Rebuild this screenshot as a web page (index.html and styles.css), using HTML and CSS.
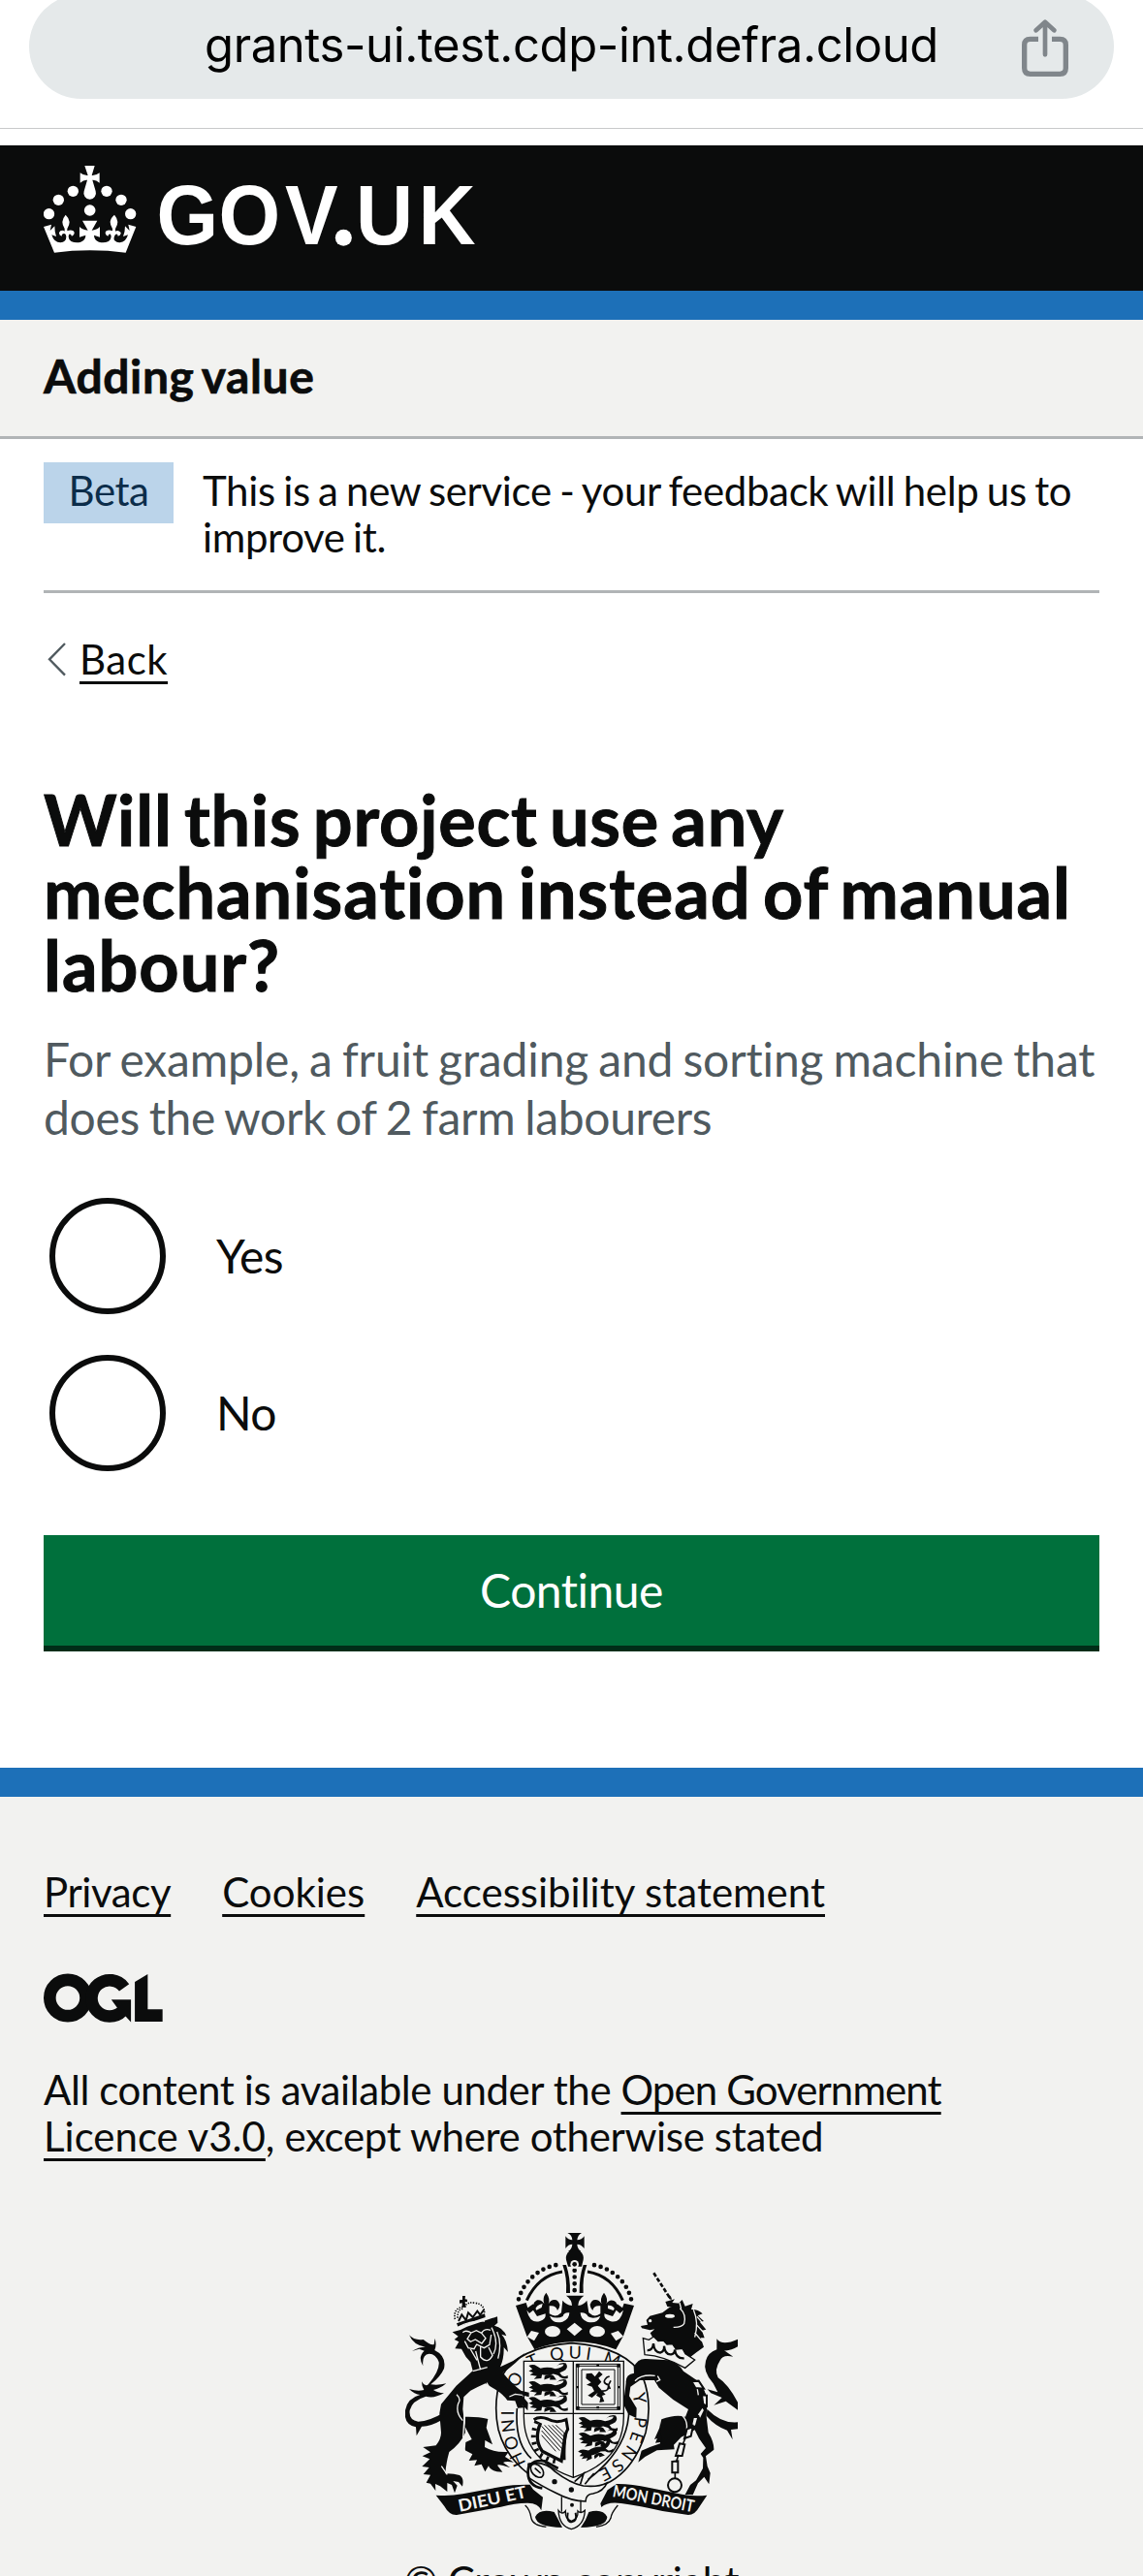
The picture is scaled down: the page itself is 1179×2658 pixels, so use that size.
FILE: index.html
```html
<!DOCTYPE html>
<html lang="en">
<head>
<meta charset="utf-8">
<title>Will this project use any mechanisation instead of manual labour? - Adding value</title>
<link rel="stylesheet" href="styles.css">
</head>
<body>
<div class="browser-bar">
  <div class="address">
    <span class="address__url">grants-ui.test.cdp-int.defra.cloud</span>
    <svg class="address__share" viewBox="72 60 150 180" fill="none" stroke="#80868b" aria-label="Share">
      <path stroke-width="16" d="M126 121H101Q83 121 83 139V211Q83 229 101 229H193Q211 229 211 211V139Q211 121 193 121H168"/>
      <path stroke-width="14" stroke-linecap="round" stroke-linejoin="round" d="M147 169V70M119 94L147 68L175 94"/>
    </svg>
  </div>
</div>

<header class="header">
  <svg class="header__logo" viewBox="45 0 1350 330" fill="#fff" role="img" aria-label="GOV.UK">
    <circle cx="61.500" cy="182" r="17"/><circle cx="91" cy="139" r="17"/><circle cx="136" cy="112" r="17"/>
    <circle cx="240" cy="112" r="17"/><circle cx="285" cy="139" r="17"/><circle cx="314" cy="182" r="17"/><circle cx="188" cy="171" r="17.500"/>
    <path d="M172 33H203L194 63Q207 64 218 55V86Q207 76 196 77L206 112A19 19 0 1 1 170 112L180 77Q169 76 158 86V55Q169 64 182 63Z"/>
    <path d="M45 222L69 215L65 234L79 220Q79 238 84 252L70 247Q77 271 97 271Q115 270 115 253Q114 243 108 243Q101 243 101 251Q92 248 93 240Q97 231 107 234L110 236V228Q103 217 103 207Q104 195 113 185Q124 195 125 207Q125 217 118 228V235Q129 230 137 235Q145 244 132 251Q129 242 124 245Q118 257 130 267Q144 273 160 269Q175 263 175 248L156 254V222Q166 232 182 233L165 203H211L194 233Q210 232 219 222V254L201 248Q201 263 216 269Q232 273 246 267Q258 257 252 245Q247 242 244 251Q231 244 239 235Q247 230 258 235V228Q251 217 251 207Q252 195 264 185Q273 195 274 207Q274 217 267 228V236Q275 230 284 240Q285 248 275 251Q274 241 267 246Q260 256 264 264Q272 272 281 271Q300 269 306 247L291 252Q297 238 297 220L311 234L307 215L331 222L299 302Q188 288 78 302Z"/>
    <text class="header__wordmark" transform="scale(0.930 1)" y="276" x="424 631 852 1010 1087 1295">GOV.UK</text>
    <circle cx="973" cy="256" r="25.500"/>
  </svg>
</header>

<section class="service"><a class="service__name">Adding value</a></section>

<div class="container">
  <div class="phase">
    <strong class="phase__tag">Beta</strong>
    <span class="phase__text">This is a new service - your feedback will help us to improve it.</span>
  </div>
  <a class="back"><svg class="back__chevron" viewBox="0 0 60 105" fill="none" stroke="#505a5f" stroke-width="7"><path d="M54 3L6 52L54 101"/></svg><span class="link">Back</span></a>
  <main class="main">
    <h1 class="heading"><span class="heading__lead">Will this project use any</span> mechanisation instead of manual labour?</h1>
    <p class="hint">For example, a fruit grading and sorting machine that <span class="hint__end">does the work of 2 farm labourers</span></p>
    <div class="radios">
      <label class="radio"><span class="radio__dot"></span>Yes</label>
      <label class="radio"><span class="radio__dot"></span>No</label>
    </div>
    <button class="button" type="button">Continue</button>
  </main>
</div>

<footer class="footer">
  <nav class="footer__links"><a class="link footer__privacy">Privacy</a><a class="link">Cookies</a><a class="link">Accessibility statement</a></nav>
  <svg class="footer__ogl" viewBox="15 51 370 152" role="img" aria-label="Open Government Licence">
    <g fill="none" stroke="#0b0c0c" stroke-width="38"><circle cx="90" cy="127" r="56"/><path d="M265 95A56 56 0 1 0 260 167"/></g>
    <path fill="#0b0c0c" d="M225 132H286V202L268 183L243 157ZM298 77L338 53V162H384V201H298Z"/>
  </svg>
  <p class="footer__licence">All content is available under the <a class="link"><span class="footer__open">Open Government</span> <span class="footer__version">Licence v3.0</span></a><span class="footer__rest">, except where otherwise stated</span></p>
  <div class="footer__copyright">
    <svg class="crest" viewBox="54 66 1029 930" role="img" aria-label="Royal coat of arms">
      <defs>
        <path id="garter-left" d="M428 784Q385 705 390 610Q396 555 428 500"/>
        <path id="garter-top" d="M440 492Q572 430 712 492"/>
        <path id="garter-right" d="M757 570Q778 655 737 735Q705 785 640 812"/>
        <path id="scroll-left" d="M222 935Q320 915 438 889"/>
        <path id="scroll-right" d="M694 888Q810 910 950 938"/>
      </defs>
      <!-- crown -->
      <g fill="#0b0c0c">
        <path d="M556 72H600Q588 78 586 94Q600 94 608 82V120Q598 107 586 107Q587 122 598 129H558Q570 122 571 107Q558 107 550 120V82Q558 94 571 94Q570 78 556 72Z"/>
        <path d="M552 155A27 27 0 1 1 605 155L600 176H558Z"/>
        <path d="M541 171L552 171Q565 210 564 258H552Q555 210 541 171ZM616 171L605 171Q592 210 593 258H605Q602 210 616 171Z"/>
        <path d="M396 297L428 288L433 304L450 292L460 311L476 303L479 291Q457 296 457 311Q442 290 462 280Q475 277 484 291Q477 274 490 257Q504 276 497 292Q506 275 522 280Q541 292 525 312Q521 295 500 298L500 322Q520 336 537 319L541 281Q551 294 570 297Q570 279 552 266H607Q589 279 589 297Q607 294 616 281L622 319Q640 336 658 322V298Q637 295 634 312Q617 292 636 280Q652 275 662 292Q655 276 669 257Q683 276 676 291Q686 276 700 282Q716 290 703 311Q699 295 681 296V306L698 312L710 292L726 304L731 290L762 297L729 391L706 433Q578 385 454 433L430 391Z"/>
      </g>
      <g fill="none" stroke="#0b0c0c">
        <path stroke-width="14" stroke-linecap="round" stroke-dasharray="0 20.500" d="M405 277C420 222 470 177 530 170M753 277C740 222 690 177 629 170M578 188V256"/>
        <path stroke-width="9" d="M430 281Q465 204 540 192M727 281Q693 204 618 192"/>
      </g>
      <g fill="#f2f2f0">
        <path d="M578 350L602 370L578 391L554 370ZM444 375L468 381L453 406L431 394ZM713 375L729 392L706 406L690 383Z"/>
        <ellipse cx="510" cy="377" rx="24" ry="17"/><ellipse cx="648" cy="377" rx="24" ry="17"/>
        <circle cx="578" cy="169" r="13"/>
        <path d="M430 311Q440 354 471 345Q491 340 488 322L462 330L450 311L438 321ZM501 329Q511 355 541 347Q562 339 562 319Q545 317 542 330Q524 340 501 329ZM596 319Q596 339 617 347Q648 355 658 329Q636 340 620 331Q613 317 596 319ZM670 322Q668 340 688 345Q719 354 729 311L718 321L707 311L696 330Z"/>
      </g>
      <circle cx="578" cy="169" r="7" fill="#0b0c0c"/>

      <!-- garter and shield -->
      <g class="crest__garter-text">
        <text><textPath href="#garter-left" textLength="282">HONI SO</textPath></text>
        <text><textPath href="#garter-top" textLength="280">T QUI M</textPath></text>
        <text><textPath href="#garter-right" textLength="285">Y PENSE</textPath></text>
      </g>
      <g fill="none" stroke="#0b0c0c" stroke-width="5">
        <path d="M350 520Q400 425 570 413Q740 425 790 520Q820 600 798 690Q755 830 640 862M350 520Q325 600 342 680Q364 765 438 820"/>
        <path d="M400 615Q392 722 444 770M745 590Q760 730 620 835" />
        <path fill="#f2f2f0" stroke-width="4" d="M421 469H730V640C730 720 690 790 574 829C460 790 421 720 421 640Z"/>
        <path stroke-width="4" d="M574 469V829M421 631H730"/>
        <path stroke-width="3" d="M583 478H719V619H583ZM589 484H712V613H589ZM600 495H702V603H600Z"/>
      </g>
      <!-- English lions, first and fourth quarters -->
      <defs>
        <g id="passant">
          <path d="M2 2Q14-4 24 3L34 9Q53 3 74 10Q95 8 97-2Q83-3 77 3Q89-9 103-5Q112 9 95 17L86 21L92 29Q100 33 108 28V36Q92 40 82 28L69 24Q50 29 38 26L36 36L16 38L24 30L5 27L14 21L2 16L12 11Z"/>
          <path d="M45 30Q57 22 69 29L77 40H59L60 34L44 40Z"/>
        </g>
      </defs>
      <g fill="#0b0c0c">
        <use href="#passant" transform="translate(434 481) scale(1.140)"/><use href="#passant" transform="translate(434 532) scale(1.140)"/><use href="#passant" transform="translate(434 581) scale(1.140)"/>
        <use href="#passant" transform="translate(588 643) scale(1.140)"/><use href="#passant" transform="translate(588 692) rotate(-4) scale(1.140)"/><use href="#passant" transform="translate(586 748) rotate(-19) scale(1)"/>
        <!-- Scottish lion rampant -->
        <path d="M614 508L631 506L641 517L654 500L665 510L652 521L661 533L650 545L663 560L674 572L663 576L670 594L655 597L658 583L645 575L650 566L632 582L619 575L639 562L632 548L615 542L629 535L613 522Z"/>
        <path fill="none" stroke="#0b0c0c" stroke-width="5" d="M662 561Q687 563 682 542Q660 536 678 519L686 516M688 555L683 543L690 529"/>
        <!-- harp -->
        <path fill="none" stroke="#0b0c0c" stroke-width="9" d="M452 650Q470 638 495 648Q520 663 552 650L557 680Q544 700 546 775"/>
        <path fill="none" stroke="#0b0c0c" stroke-width="10" d="M473 660Q451 710 478 748Q507 763 537 778L550 690"/>
        <path fill="none" stroke="#0b0c0c" stroke-width="15" stroke-dasharray="8 14" d="M462 655Q438 708 466 755Q495 775 520 779"/>
        <path fill="none" stroke="#0b0c0c" stroke-width="3" d="M476 670L541 742M476 684L532 746M476 698L520 748M485 667L543 728M497 667L544 715M509 667L544 702M520 667L545 690"/>
      </g>
      <g fill="#0b0c0c"><path d="M583 478h10v10h-10zM709 478h10v10h-10zM583 609h10v10h-10zM709 609h10v10h-10zM646 479h8v7h-8zM646 609h8v7h-8zM584 546h7v7h-7zM711 546h7v7h-7z"/></g>

      <!-- garter buckle -->
      <path fill="#f2f2f0" stroke="#0b0c0c" stroke-width="5" d="M435 787Q485 776 518 811Q565 847 605 855Q650 860 678 846Q668 872 635 879Q613 880 612 903Q568 903 520 877Q470 852 435 829Z"/>
      <path fill="none" stroke="#0b0c0c" stroke-width="8" d="M478 862Q427 854 435 800Q448 772 485 778L527 801"/>
      <ellipse cx="462" cy="808" rx="16" ry="24" transform="rotate(-42 462 808)" fill="#f2f2f0" stroke="#0b0c0c" stroke-width="5"/>
      <path fill="none" stroke="#0b0c0c" stroke-width="5" d="M455 800L473 816M578 842L606 817L596 850M610 850L638 816"/>
      <g fill="#0b0c0c"><circle cx="516" cy="842" r="8"/><circle cx="568" cy="867" r="8"/></g>

      <!-- lion -->
      <g fill="#0b0c0c">
        <path d="M66 388Q82 406 110 402Q134 422 143 417L146 398Q152 421 145 435Q182 453 174 492Q164 516 133 541Q155 545 181 538Q162 554 141 558Q153 567 174 568Q142 586 118 578Q75 591 68 621Q64 651 94 656Q130 654 171 629L169 650Q130 672 105 671L89 700L87 673Q48 665 54 621Q60 584 100 573Q82 572 66 555Q93 564 112 558Q105 548 105 532Q116 550 126 540Q161 499 158 472Q149 446 128 446Q105 448 109 484Q92 456 113 437L97 431L75 438Q95 425 116 425Q80 420 66 388Z"/>
        <path d="M200 379L225 372L245 362L320 337L339 331L340 350L330 359Q357 365 367 391L352 386Q369 403 372 441L359 426Q360 460 348 487L388 468L425 443Q400 474 356 505Q386 542 412 560L437 566V580L414 574L434 598L433 622L414 602L423 613L402 614L394 592L370 590Q360 574 334 557L302 538Q280 548 256 560L235 580L232 617Q238 667 240 690Q225 725 190 750Q180 785 178 817Q202 816 222 822Q237 830 231 857L219 843L202 840L215 854L207 877L198 852L184 846L184 873L162 856L147 849L148 870L132 848L119 845L132 821L110 819L128 798L106 795L130 772L107 763L132 751L109 735L149 730Q165 710 165 690L160 630L165 602L212 545L263 499L256 472L242 456L228 431L208 430L220 409L206 402L218 392Z"/>
        <path d="M240 641Q280 640 310 648L305 675L324 727L301 714L300 735Q328 752 374 750L363 765L390 782Q365 778 357 783L379 799Q344 787 339 791L355 812Q318 811 312 793L301 811L290 788L268 793L276 775L251 777L262 757L239 745L241 720L260 711L239 672Z"/>
        <path d="M213 352L300 322L302 333L217 362Z"/>
        <path d="M231 267H240L239 277L246 278V286L239 285L242 302H230V289L222 290V280L231 279Z"/>
      </g>
      <g fill="none" stroke="#0b0c0c">
        <path stroke-width="5" stroke-dasharray="4 4" d="M208 339Q201 303 239 300Q245 284 272 289Q299 294 299 319M216 335Q215 305 236 307"/>
        <path stroke-width="6" d="M219 345L229 325L242 342L249 319L263 333L277 314L286 326L298 309"/>
      </g>
      <g fill="none" stroke="#f2f2f0" stroke-width="4">
        <path d="M218 363Q257 343 300 345M232 380Q242 371 258 381L274 374L290 382Q300 366 318 373M258 381L246 400L256 409L271 402L291 414L303 398L290 382M238 407L249 428L267 431L275 417L298 428L315 418L320 387M256 432L276 466M287 422L287 456Q309 480 324 451L312 426M272 438L287 496M321 365Q345 410 327 447M338 378Q354 413 341 461M263 500L308 488M306 536L317 556L301 542M376 579L394 571L416 574M213 572Q228 586 218 600Q209 628 232 653M238 625L233 706M166 794L184 820M229 723L243 760"/>
      </g>

      <!-- unicorn -->
      <g fill="#0b0c0c">
        <path d="M783 360L804 356L800 342L811 329L850 319L871 303L896 294L911 279L920 299L944 291L939 309Q960 308 974 322L959 328L978 345L966 348L985 371L972 374L980 397L968 397L978 425L955 442L930 461L800 428L822 400L812 382L826 370L811 373L786 367Z"/>
        <path d="M761 487Q775 459 800 462L868 466Q899 475 915 500L966 535L984 571L988 603L986 641L992 690Q1010 720 1009 743L984 763L989 794L998 815L994 850L979 827L960 847L944 883L920 882L936 852L954 838L975 801L976 768L968 756L984 738L963 708L950 682L908 704L885 728L887 742L833 745L796 765L775 782L785 746L811 735L843 724L842 705L825 711L841 675L847 649Q890 632 921 641L930 618L883 588L839 551L825 528L780 528L751 548L747 577L770 614L769 645L745 634L729 602L737 536Q735 510 762 506Z"/>
        <path d="M1018 400Q1035 423 1083 401V424Q1060 438 1041 436L1069 455Q1036 447 1028 467Q1009 496 1022 520Q1052 539 1083 596V620L1046 593L1009 605L1034 582L1000 568L989 556L1021 565L1007 538Q974 501 984 468Q990 443 1018 433Z"/>
        <path d="M988 617Q1033 663 1083 658V679L1062 681L1067 712L1050 683Q1012 669 986 638Z"/>
        <path d="M859 285L888 277L880 288L912 291L902 305L865 300ZM867 268Q875 260 879 278Q869 280 867 268Z"/>
        <path d="M848 719L828 722L843 684L841 654Z"/>
      </g>
      <path fill="none" stroke="#0b0c0c" stroke-width="8" stroke-dasharray="13 6" d="M823 196L874 275"/>
      <g fill="none" stroke="#f2f2f0" stroke-width="4">
        <path d="M904 305Q925 325 917 353Q909 365 884 364M946 310Q963 350 950 395M957 331L974 351M955 356L975 378M950 381L972 407M903 288L908 307M765 530Q785 509 827 514M835 515L842 527L831 532M955 537L961 574M880 617Q931 639 925 680"/>
      </g>
      <ellipse cx="873" cy="329" rx="15" ry="6" fill="#f2f2f0"/><circle cx="812" cy="344" r="5" fill="#f2f2f0"/>
      <path fill="#f2f2f0" stroke="#0b0c0c" stroke-width="4" d="M790 398L808 403L823 393L837 407L853 405L864 417L881 416L892 432L912 430L921 446L950 465L920 490Q855 453 795 449Z"/>
      <path fill="none" stroke="#0b0c0c" stroke-width="7" d="M803 435Q820 437 822 414Q824 441 843 443Q857 438 855 422Q858 450 877 448Q889 445 888 433Q892 462 917 460"/>
      <g fill="#f2f2f0" stroke="#0b0c0c" stroke-width="6">
        <path d="M940 532L962 530L978 554L952 552ZM972 574L987 575V608L976 602ZM956 634L974 609L981 621L967 650ZM945 641L961 642L953 672L939 669ZM926 679L944 673L938 701L918 708ZM903 724L919 727L911 762L891 762ZM880 780L898 778V814H880Z"/>
        <circle cx="888" cy="853" r="21"/>
      </g>
      <path stroke="#0b0c0c" stroke-width="5" d="M974 553L982 575M978 603L970 612M958 645L962 636M944 665L941 678M923 702L913 726M900 758L892 782M889 812V833"/>

      <!-- scrolls -->
      <g fill="#0b0c0c">
        <path d="M149 884Q190 888 232 880L350 858Q390 850 440 851L450 866L480 890L475 931Q466 908 434 908Q400 907 350 920L213 945Q190 946 175 918Z"/>
        <path d="M988 884Q950 889 910 881L810 861Q750 848 708 849L680 868L658 910L661 921Q680 903 722 909Q780 917 850 933L930 945Q950 945 964 920Z"/>
        <path d="M456 951Q470 924 515 936L528 960L540 984Q460 982 456 951ZM679 951Q665 924 622 936L612 960L597 984Q679 982 679 951Z"/>
      </g>
      <g fill="none" stroke="#0b0c0c" stroke-width="4">
        <path d="M425 915Q440 928 444 955Q448 977 490 982M712 915Q692 938 690 955Q682 978 645 982"/>
        <path fill="#f2f2f0" d="M538 889V935M597 899V935M528 931Q540 946 550 933Q548 958 568 964Q590 958 588 933Q598 943 610 931Q608 979 568 989Q530 980 528 931Z"/>
        <path stroke-width="6" d="M557 938Q552 966 569 967Q587 965 581 938"/>
      </g>
      <circle cx="570" cy="914" r="6" fill="#0b0c0c"/>
      <g class="crest__motto">
        <text><textPath href="#scroll-left" textLength="215" lengthAdjust="spacingAndGlyphs">DIEU ET</textPath></text>
        <text><textPath href="#scroll-right" textLength="255" lengthAdjust="spacingAndGlyphs">MON DROIT</textPath></text>
      </g>
    </svg>
    <a class="footer__crown">© Crown copyright</a>
  </div>
</footer>
</body>
</html>
```
FILE: styles.css
```css
* { box-sizing: border-box; }

html { overflow: hidden; }

body {
  margin: 0;
  height: 2658px;
  overflow: hidden;
  background: #fff;
  color: #0b0c0c;
  font: 400 42px/48px Lato, "Noto Sans", sans-serif;
}

h1, p { margin: 0; }

.link {
  text-decoration: underline;
  text-decoration-thickness: 3px;
  text-underline-offset: 7px;
}

/* Browser address bar */
.browser-bar {
  display: flow-root;
  height: 133px;
  padding: 0 30px;
  border-bottom: 1px solid #c8c9ca;
}

.address {
  display: flex;
  align-items: center;
  justify-content: space-between;
  height: 108px;
  margin-top: -6px;
  padding: 0 46px 0 181px;
  border-radius: 54px;
  background: #e5e9ea;
}

.address__url {
  margin-top: -3px;
  color: #000;
  font: 400 49px/60px Inter, sans-serif;
  letter-spacing: -0.4px;
}

.address__share {
  width: 50px;
  height: 60px;
  margin-top: 3px;
}

/* Header */
.header {
  height: 180px;
  margin-top: 17px;
  padding: 10px 45px 0;
  border-bottom: 30px solid #1d70b8;
  background: #0b0c0c;
}

.header__logo {
  display: block;
  width: 450px;
  height: 110px;
}

.header__wordmark { font: 700 264px "Liberation Sans", Arial, sans-serif; }

.service {
  height: 123px;
  padding: 28px 45px 0;
  border-bottom: 3px solid #b1b4b6;
  background: #f2f2f0;
}

.service__name {
  font-size: 48px;
  font-weight: 700;
  line-height: 60px;
  letter-spacing: 0.6px;
  word-spacing: -4px;
  -webkit-text-stroke: 0.7px currentColor;
}

.container { padding: 24px 45px 0; }

/* Phase banner */
.phase {
  display: flex;
  align-items: flex-start;
  gap: 30px;
  height: 135px;
  border-bottom: 3px solid #b1b4b6;
}

.phase__tag {
  flex: none;
  width: 134px;
  height: 63px;
  padding-top: 5px;
  background: #bbd4ea;
  color: #0c2d4a;
  font-weight: 400;
  text-align: center;
  letter-spacing: -0.5px;
}

.phase__text {
  padding-top: 5px;
  letter-spacing: -0.35px;
  word-spacing: -2px;
}

.back {
  display: flex;
  align-items: center;
  width: max-content;
  margin-top: 44px;
  padding-left: 4px;
  gap: 13px;
  letter-spacing: 0.5px;
}

.back__chevron {
  width: 20px;
  height: 35px;
}

/* Question */
.main { padding-top: 104px; }

.heading {
  font-size: 72px;
  font-weight: 700;
  line-height: 75px;
  letter-spacing: 1px;
  word-spacing: -6px;
  -webkit-text-stroke: 1px currentColor;
}

.heading__lead { letter-spacing: 0.8px; }

.hint {
  margin-top: 30px;
  margin-right: -10px;
  color: #505a5f;
  font-size: 48px;
  line-height: 60px;
  letter-spacing: -0.15px;
  word-spacing: -2px;
}

.hint__end { letter-spacing: -0.35px; }

.radios {
  display: grid;
  gap: 42px;
  margin-top: 53px;
}

.radio {
  display: flex;
  align-items: center;
  gap: 52px;
  height: 120px;
  padding-left: 6px;
  font-size: 48px;
  line-height: 60px;
  letter-spacing: -0.6px;
}

.radio__dot {
  width: 120px;
  height: 120px;
  border: 6px solid #0b0c0c;
  border-radius: 50%;
}

.button {
  display: block;
  width: 100%;
  height: 114px;
  margin: 66px 0 126px;
  padding: 0 0 2px;
  border: 0;
  background: #00703c;
  box-shadow: 0 6px 0 #002d18;
  color: #fff;
  font: 400 48px/57px Lato, "Noto Sans", sans-serif;
  letter-spacing: -0.5px;
}

/* Footer */
.footer {
  height: 834px;
  padding: 74px 45px 0;
  border-top: 30px solid #1d70b8;
  background: #f2f2f0;
}

.footer__links {
  display: flex;
  gap: 53px;
}

.footer__privacy { letter-spacing: -0.4px; }

.footer__ogl {
  display: block;
  width: 123px;
  height: 51px;
  margin: 60px 0 45px;
}

.footer__licence {
  width: 960px;
  letter-spacing: -0.4px;
}

.footer__open { letter-spacing: -0.9px; }

.footer__version { letter-spacing: 0; }

.footer__rest { letter-spacing: -0.35px; }

.footer__copyright {
  display: flex;
  flex-direction: column;
  align-items: center;
  margin-top: 74px;
}

.crest {
  width: 343px;
  height: 310px;
  margin-bottom: 27px;
}

.footer__crown { letter-spacing: -0.4px; }

.crest__garter-text {
  fill: #0b0c0c;
  font: 400 54px Lato, sans-serif;
}

.crest__motto {
  fill: #f2f2f0;
  font: 700 52px Lato, sans-serif;
}
```
